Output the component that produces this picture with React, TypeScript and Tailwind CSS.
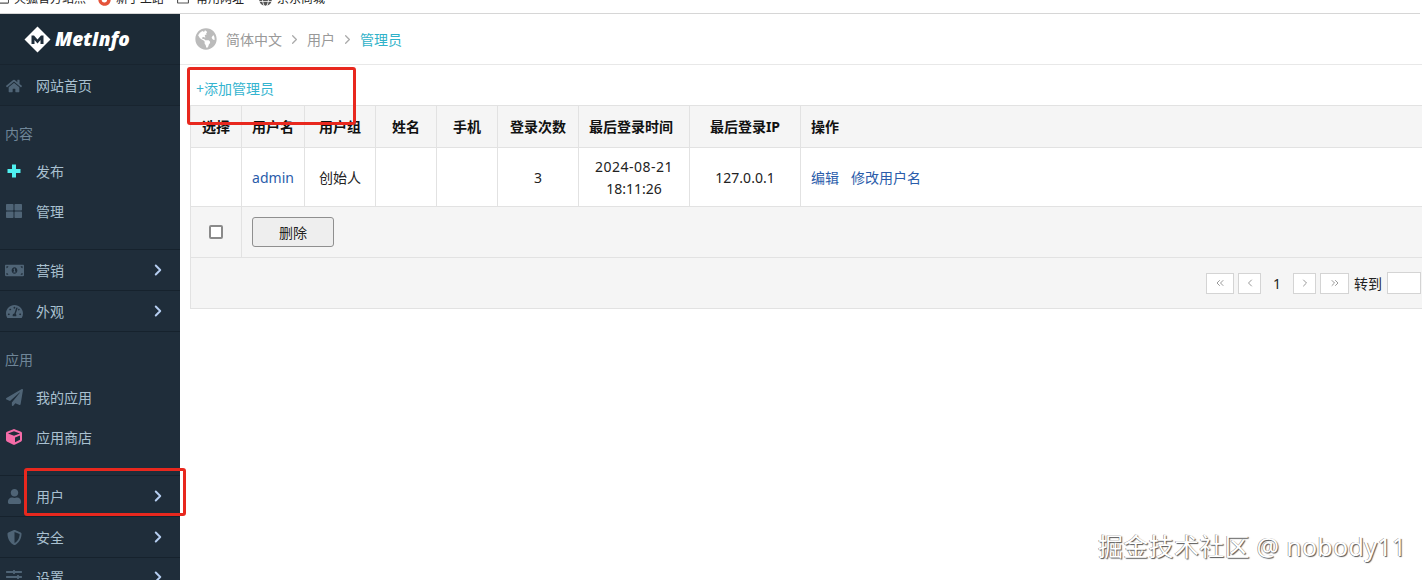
import React from "react";
import {
  FaHome, FaThLarge, FaMoneyBillAlt, FaTachometerAlt, FaPaperPlane, FaCube, FaUser, FaShieldAlt, FaSlidersH, FaGlobeAmericas, FaFirefoxBrowser, FaRegFolder, FaGlobe,
} from "react-icons/fa";
import { LuChevronRight, LuChevronsLeft, LuChevronsRight, LuChevronLeft } from "react-icons/lu";

const font = "font-['Noto_Sans','Noto_Sans_CJK_SC',sans-serif]";

function Row({ icon, label, arrow, border, iconCls = "text-[#4f6476]" }: { icon: React.ReactNode; label: string; arrow?: boolean; border?: boolean; iconCls?: string }) {
  return (
    <div className={`flex items-center shrink-0 ${border ? "border-b border-[#16222d] h-[41px]" : "h-[40px] pb-[2px]"}`}>
      <span className={`w-[36px] flex justify-center pr-[8px] text-[16px] ${iconCls}`}>{icon}</span>
      <span className="text-[14px] text-[#a9c0d0] flex-1">{label}</span>
      {arrow && <LuChevronRight strokeWidth={2.6} className="text-[#b5cdf0] mr-[13px] text-[18px]" />}
    </div>
  );
}

function Label({ children }: { children: React.ReactNode }) {
  return <div className="h-[46px] pt-[8px] pl-[5px] flex items-center text-[14px] text-[#6f8698] shrink-0">{children}</div>;
}

function Th({ children, cls = "text-center" }: { children?: React.ReactNode; cls?: string }) {
  return <th className={`border border-[#e2e2e2] bg-[#f5f5f5] px-[10px] h-[42px] text-[14px] font-bold text-[#111] whitespace-nowrap ${cls}`}>{children}</th>;
}
function Td({ children, cls = "text-center" }: { children?: React.ReactNode; cls?: string }) {
  return <td className={`border border-[#e2e2e2] bg-white px-[10px] pt-[2px] text-[14px] leading-[22px] text-[#222] ${cls}`}>{children}</td>;
}

function PageBtn({ children, w = "w-[27px]", cls = "" }: { children: React.ReactNode; w?: string; cls?: string }) {
  return <span className={`flex ${w} h-[21px] items-center justify-center border border-[#d4d4d4] bg-white text-[#999] text-[12px] ${cls}`}>{children}</span>;
}

function Bookmark({ icon, label, cls }: { icon: React.ReactNode; label: string; cls: string }) {
  return <span className={`flex items-center gap-[5px] text-[12px] text-[#222] whitespace-nowrap ${cls}`}>{icon}{label}</span>;
}

export default function App() {
  return (
    <div className={`relative h-[580px] w-[1422px] overflow-hidden bg-white flex flex-col ${font}`}>
      <div className="h-[14px] shrink-0 border-b border-[#d6d6d6] bg-white overflow-hidden flex items-end pb-[5px] -translate-x-[2px]">
        <Bookmark cls="mr-[12px]" icon={<FaRegFolder className="text-[#555] text-[11px]" />} label="火狐官方站点" />
        <Bookmark cls="mr-[13px]" icon={<FaFirefoxBrowser className="text-[#e5533a] text-[13px]" />} label="新手上路" />
        <Bookmark cls="mr-[15px] gap-[7px]" icon={<FaRegFolder className="text-[#555] text-[12px]" />} label="常用网址" />
        <Bookmark cls="" icon={<FaGlobe className="text-[#555] text-[13px]" />} label="京东商城" />
      </div>
      <div className="flex flex-1 min-h-0">
        <aside className="w-[180px] shrink-0 bg-[#1f2d3a] flex flex-col overflow-hidden">
          <div className="h-[51px] shrink-0 flex items-center pl-[24px] gap-[4px] border-b border-[#18242f] bg-[#1c2a36]">
            <svg width="27" height="27" viewBox="0 0 27 27">
              <path d="M13.5 0.5 26.5 13.5 13.5 26.5 0.5 13.5Z" fill="#fff" />
              <path d="M7.5 18V9.5h2.5l3.5 4 3.5-4h2.5V18h-3v-4l-3 3.4-3-3.4v4Z" fill="#1f2d3a" />
            </svg>
            <span className="font-['Open_Sans',sans-serif] text-white text-[19px] font-extrabold italic">MetInfo</span>
          </div>
          <div className="h-[41px] shrink-0 border-b border-[#18242f] bg-[#1c2a36] flex items-center pt-[1px]">
            <span className="w-[36px] flex justify-center pr-[8px] text-[16px] text-[#4f6476]"><FaHome /></span>
            <span className="text-[14px] text-[#a9c0d0]">网站首页</span>
          </div>
          <Label>内容</Label>
          <Row icon={<svg width="14" height="14" viewBox="0 0 14 14"><path d="M5 0.5h4V5h4.5v4H9v4.5H5V9H0.5V5H5Z" fill="#4ff0f0" /></svg>} label="发布" />
          <Row icon={<FaThLarge />} label="管理" />
          <div className="h-[18px] shrink-0 border-b border-[#16222d]" />
          <Row icon={<FaMoneyBillAlt className="text-[19px]" />} label="营销" arrow border />
          <Row icon={<FaTachometerAlt className="text-[17px]" />} label="外观" arrow border />
          <Label>应用</Label>
          <Row icon={<FaPaperPlane className="text-[17px]" />} label="我的应用" />
          <Row icon={<FaCube />} label="应用商店" iconCls="text-[#f56ca8]" />
          <div className="h-[18px] shrink-0 border-b border-[#16222d]" />
          <Row icon={<FaUser className="text-[15px]" />} label="用户" arrow border />
          <Row icon={<FaShieldAlt className="text-[15px]" />} label="安全" arrow border />
          <Row icon={<FaSlidersH />} label="设置" arrow />
        </aside>

        <main className="flex-1 min-w-0 overflow-hidden">
          <div className="h-[51px] border-b border-[#e8e8e8] flex items-center pl-[15px] text-[14px] text-[#999]">
            <FaGlobeAmericas className="text-[#bbb] text-[22px] mr-[9px]" />
            <span>简体中文</span>
            <LuChevronRight className="mx-[5px] text-[#aaa] text-[15px]" />
            <span>用户</span>
            <LuChevronRight className="mx-[5px] text-[#aaa] text-[15px]" />
            <span className="text-[#2fb2c9]">管理员</span>
          </div>
          <div className="h-[40px] pl-[16px] pt-[6px] flex items-center text-[14px] text-[#35b4cf]">+添加管理员</div>
          <table className="ml-[10px] w-[1240px] table-fixed border-collapse">
            <colgroup>
              <col className="w-[51px]" /><col className="w-[63px]" /><col className="w-[71px]" /><col className="w-[61px]" /><col className="w-[61px]" /><col className="w-[81px]" /><col className="w-[111px]" /><col className="w-[111px]" /><col />
            </colgroup>
            <thead>
              <tr>
                <Th>选择</Th><Th>用户名</Th><Th>用户组</Th><Th>姓名</Th><Th>手机</Th><Th>登录次数</Th><Th cls="text-left !pl-[10px]">最后登录时间</Th><Th>最后登录IP</Th><Th cls="text-left">操作</Th>
              </tr>
            </thead>
            <tbody>
              <tr className="h-[59px]">
                <Td />
                <Td><span className="text-[#2a5caa]">admin</span></Td>
                <Td>创始人</Td>
                <Td />
                <Td />
                <Td>3</Td>
                <Td><span className="tracking-[0.5px]">2024-08-21</span><br />18:11:26</Td>
                <Td>127.0.0.1</Td>
                <Td cls="text-left"><span className="text-[#2a5caa] mr-[12px]">编辑</span><span className="text-[#2a5caa]">修改用户名</span></Td>
              </tr>
              <tr className="h-[51px]">
                <td className="border border-[#e2e2e2] bg-[#f5f5f5]">
                  <span className="block mx-auto -mt-[1px] w-[14px] h-[14px] border-2 border-[#8a8a8a] rounded-[2px] bg-white" />
                </td>
                <td colSpan={8} className="border border-[#e2e2e2] bg-[#f5f5f5] px-[10px]">
                  <span className="flex w-[82px] h-[30px] items-center justify-center border border-[#8f8f8f] rounded-[3px] bg-[#eeeeee] text-[14px] text-[#222]">删除</span>
                </td>
              </tr>
              <tr className="h-[51px]">
                <td colSpan={9} className="border border-[#e2e2e2] bg-[#f5f5f5]">
                  <div className="flex items-center justify-end w-[1230px]">
                    <PageBtn w="w-[28px]" cls="mr-[4px]"><LuChevronsLeft /></PageBtn>
                    <PageBtn w="w-[23px]"><LuChevronLeft /></PageBtn>
                    <span className="w-[32px] text-center text-[14px] text-[#222]">1</span>
                    <PageBtn w="w-[23px]" cls="mr-[4px]"><LuChevronRight /></PageBtn>
                    <PageBtn w="w-[29px]" cls="mr-[5px]"><LuChevronsRight /></PageBtn>
                    <span className="text-[14px] text-[#222] mr-[5px]">转到</span>
                    <span className="w-[34px] h-[22px] border border-[#d4d4d4] bg-white" />
                  </div>
                </td>
              </tr>
            </tbody>
          </table>
        </main>
      </div>

      <div className="absolute left-[187px] top-[67px] w-[169px] h-[58px] border-[3px] border-[#e8281e] rounded-[3px]" />
      <div className="absolute left-[24px] top-[468px] w-[162px] h-[48px] border-[3px] border-[#e8281e] rounded-[3px]" />
      <div className="absolute left-[1098px] top-[530px] text-[25px] leading-[32px] text-white tracking-[0.3px] whitespace-nowrap [text-shadow:1px_1px_1px_#555,-0.5px_-0.5px_0.5px_#777]">掘金技术社区 @ nobody11</div>
    </div>
  );
}
